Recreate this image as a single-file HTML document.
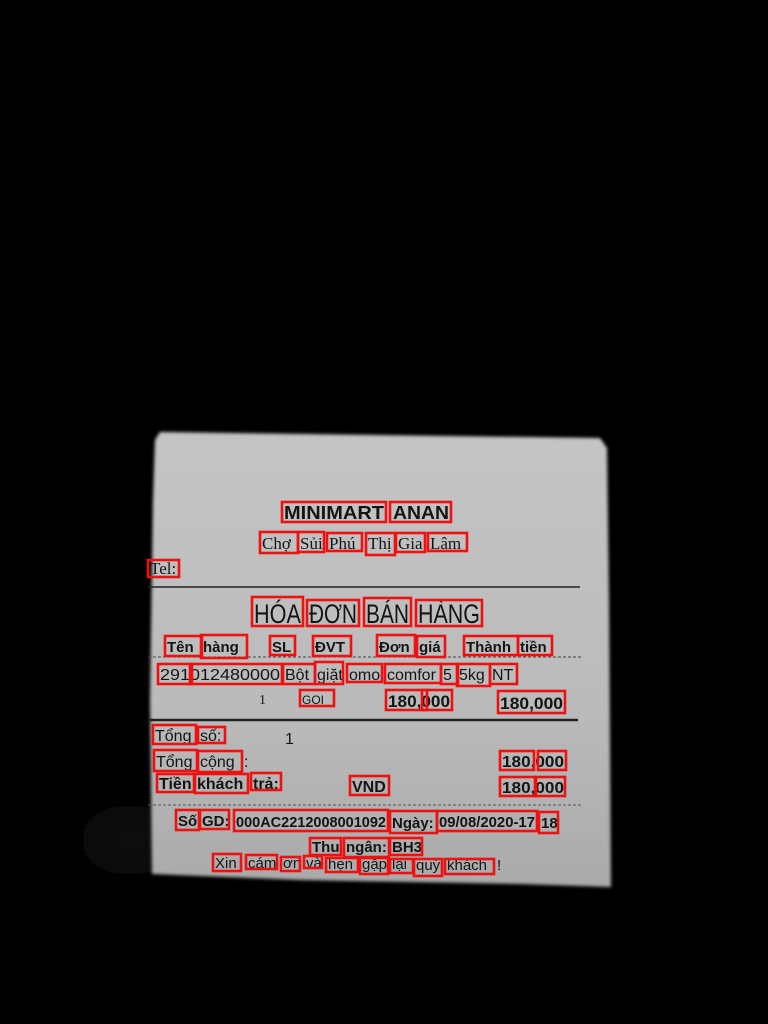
<!DOCTYPE html>
<html><head><meta charset="utf-8"><style>
html,body{margin:0;padding:0;background:#000;width:768px;height:1024px;overflow:hidden}
svg{display:block}
text{font-family:"Liberation Sans",sans-serif;fill:#141414}
.s{font-family:"Liberation Serif",serif}
</style></head><body>
<svg width="768" height="1024" viewBox="0 0 768 1024" xmlns="http://www.w3.org/2000/svg">
<defs>
<linearGradient id="g" x1="0" y1="0" x2="0" y2="1">
<stop offset="0" stop-color="#c4c4c4"/><stop offset="0.6" stop-color="#bbbbbb"/><stop offset="1" stop-color="#aaaaaa"/>
</linearGradient>
<filter id="b"><feGaussianBlur stdDeviation="1.5"/></filter>
<filter id="b2"><feGaussianBlur stdDeviation="18"/></filter>
</defs>
<rect width="768" height="1024" fill="#000"/>
<ellipse cx="130" cy="840" rx="50" ry="35" fill="#0b0b0b" filter="url(#b2)"/>
<polygon points="160,432 600,438 607,448 609,600 611,887 520,884 300,880 152,874 150,700 153,500 155,440" fill="url(#g)" filter="url(#b)"/>
<g fill="none" stroke="#222">
<line x1="148" y1="587" x2="580" y2="587" stroke-width="1.5"/>
<line x1="148" y1="657" x2="582" y2="657" stroke-width="1" stroke-dasharray="3,2" stroke="#444"/>
<line x1="148" y1="720" x2="578" y2="720" stroke-width="2.5"/>
<line x1="148" y1="805" x2="582" y2="805" stroke-width="1" stroke-dasharray="3,2" stroke="#555"/>
</g>
<g font-weight="bold" font-size="18">
<text x="284" y="519" textLength="100" lengthAdjust="spacingAndGlyphs">MINIMART</text>
<text x="393" y="519" textLength="56" lengthAdjust="spacingAndGlyphs">ANAN</text>
</g>
<g class="s" font-size="17">
<text class="s" x="262" y="549">Chợ</text><text class="s" x="300" y="549">Sủi</text><text class="s" x="329" y="549">Phú</text><text class="s" x="368" y="549">Thị</text><text class="s" x="398" y="549">Gia</text><text class="s" x="430" y="549">Lâm</text>
<text class="s" x="150" y="574">Tel:</text>
</g>
<g font-size="27">
<text x="254" y="623" textLength="47" lengthAdjust="spacingAndGlyphs">HÓA</text>
<text x="309" y="623" textLength="48" lengthAdjust="spacingAndGlyphs">ĐƠN</text>
<text x="366" y="623" textLength="43" lengthAdjust="spacingAndGlyphs">BÁN</text>
<text x="418" y="623" textLength="62" lengthAdjust="spacingAndGlyphs">HÀNG</text>
</g>
<g font-size="15" font-weight="bold">
<text x="167" y="652">Tên</text><text x="203" y="652">hàng</text><text x="272" y="652">SL</text><text x="315" y="652">ĐVT</text><text x="379" y="652">Đơn</text><text x="419" y="652">giá</text><text x="466" y="652">Thành</text><text x="520" y="652">tiền</text>
</g>
<g font-size="16">
<text x="160" y="680" textLength="120" lengthAdjust="spacingAndGlyphs">291012480000</text>
<text x="285" y="680">Bột</text><text x="317" y="680">giặt</text><text x="349" y="680">omo</text><text x="387" y="680">comfor</text><text x="443" y="680">5</text><text x="459" y="680">5kg</text><text x="492" y="680">NT</text>
</g>
<text x="259" y="704" font-size="14" class="s" fill="#444">1</text>
<text x="302" y="704" font-size="12" fill="#444">GOI</text>
<g font-size="17" font-weight="bold">
<text x="388" y="707" textLength="62" lengthAdjust="spacingAndGlyphs">180,000</text>
<text x="500" y="709" textLength="63" lengthAdjust="spacingAndGlyphs">180,000</text>
</g>
<g font-size="16">
<text x="155" y="741">Tổng</text><text x="200" y="741">số:</text><text x="285" y="744">1</text>
<text x="156" y="767">Tổng</text><text x="200" y="767">cộng</text><text x="244" y="767">:</text>
</g>
<g font-size="16" font-weight="bold">
<text x="159" y="789">Tiền</text><text x="197" y="789">khách</text><text x="253" y="789">trả:</text>
<text x="352" y="792">VND</text>
<text x="502" y="767" textLength="62" lengthAdjust="spacingAndGlyphs">180,000</text>
<text x="502" y="793" textLength="62" lengthAdjust="spacingAndGlyphs">180,000</text>
</g>
<g font-size="15" font-weight="bold">
<text x="178" y="826">Số</text><text x="202" y="826">GD:</text>
<text x="236" y="827" textLength="150" lengthAdjust="spacingAndGlyphs">000AC2212008001092</text>
<text x="392" y="828">Ngày:</text>
<text x="439" y="827" textLength="96" lengthAdjust="spacingAndGlyphs">09/08/2020-17</text>
<text x="541" y="828">18</text>
<text x="312" y="852">Thu</text><text x="346" y="852">ngân:</text><text x="392" y="852">BH3</text>
</g>
<g font-size="15">
<text x="215" y="868">Xin</text><text x="248" y="868">cám</text><text x="283" y="868">ơn</text><text x="306" y="868">và</text><text x="328" y="869">hẹn</text><text x="362" y="869">gặp</text><text x="392" y="869">lại</text><text x="416" y="870">quý</text><text x="447" y="870">khách</text><text x="497" y="870">!</text>
</g>
<g fill="none" stroke="#f01010" stroke-width="2.6">
<rect x="282" y="502" width="104" height="20"/><rect x="390" y="502" width="61" height="20"/>
<rect x="260" y="532" width="38" height="21"/><rect x="298" y="532" width="26" height="20"/><rect x="327" y="533" width="35" height="18"/><rect x="366" y="533" width="29" height="22"/><rect x="396" y="533" width="29" height="19"/><rect x="428" y="533" width="39" height="18"/>
<rect x="148" y="560" width="31" height="17"/>
<rect x="252" y="597" width="51" height="29"/><rect x="307" y="600" width="52" height="26"/><rect x="364" y="598" width="47" height="28"/><rect x="416" y="600" width="66" height="26"/>
<rect x="165" y="636" width="37" height="20"/><rect x="201" y="635" width="46" height="23"/><rect x="270" y="636" width="25" height="19"/><rect x="313" y="636" width="38" height="20"/><rect x="377" y="635" width="38" height="21"/><rect x="417" y="636" width="28" height="21"/><rect x="464" y="636" width="54" height="19"/><rect x="518" y="636" width="34" height="19"/>
<rect x="158" y="664" width="34" height="20"/><rect x="190" y="664" width="92" height="20"/><rect x="283" y="664" width="32" height="20"/><rect x="315" y="662" width="28" height="22"/><rect x="347" y="664" width="35" height="18"/><rect x="385" y="664" width="56" height="19"/><rect x="441" y="664" width="17" height="20"/><rect x="457" y="664" width="33" height="22"/><rect x="490" y="664" width="27" height="20"/>
<rect x="300" y="690" width="34" height="16"/><rect x="386" y="690" width="41" height="20"/><rect x="422" y="690" width="30" height="20"/><rect x="498" y="691" width="67" height="22"/>
<rect x="153" y="725" width="43" height="19"/><rect x="198" y="727" width="27" height="16"/>
<rect x="154" y="750" width="43" height="21"/><rect x="198" y="751" width="44" height="21"/>
<rect x="157" y="774" width="37" height="18"/><rect x="195" y="774" width="53" height="19"/><rect x="251" y="773" width="30" height="17"/><rect x="350" y="776" width="39" height="19"/>
<rect x="500" y="751" width="34" height="19"/><rect x="538" y="751" width="28" height="19"/><rect x="500" y="777" width="36" height="19"/><rect x="535" y="777" width="30" height="19"/>
<rect x="176" y="810" width="23" height="20"/><rect x="200" y="810" width="29" height="19"/><rect x="234" y="810" width="154" height="21"/><rect x="390" y="811" width="47" height="22"/><rect x="437" y="811" width="100" height="20"/><rect x="539" y="812" width="19" height="21"/>
<rect x="310" y="838" width="31" height="17"/><rect x="344" y="838" width="45" height="19"/><rect x="390" y="838" width="32" height="17"/>
<rect x="213" y="854" width="28" height="17"/><rect x="246" y="855" width="31" height="14"/><rect x="281" y="857" width="19" height="14"/><rect x="304" y="856" width="18" height="12"/><rect x="326" y="858" width="32" height="14"/><rect x="360" y="858" width="28" height="16"/><rect x="390" y="859" width="23" height="14"/><rect x="414" y="859" width="28" height="17"/><rect x="445" y="859" width="49" height="15"/>
</g>
</svg>
</body></html>
